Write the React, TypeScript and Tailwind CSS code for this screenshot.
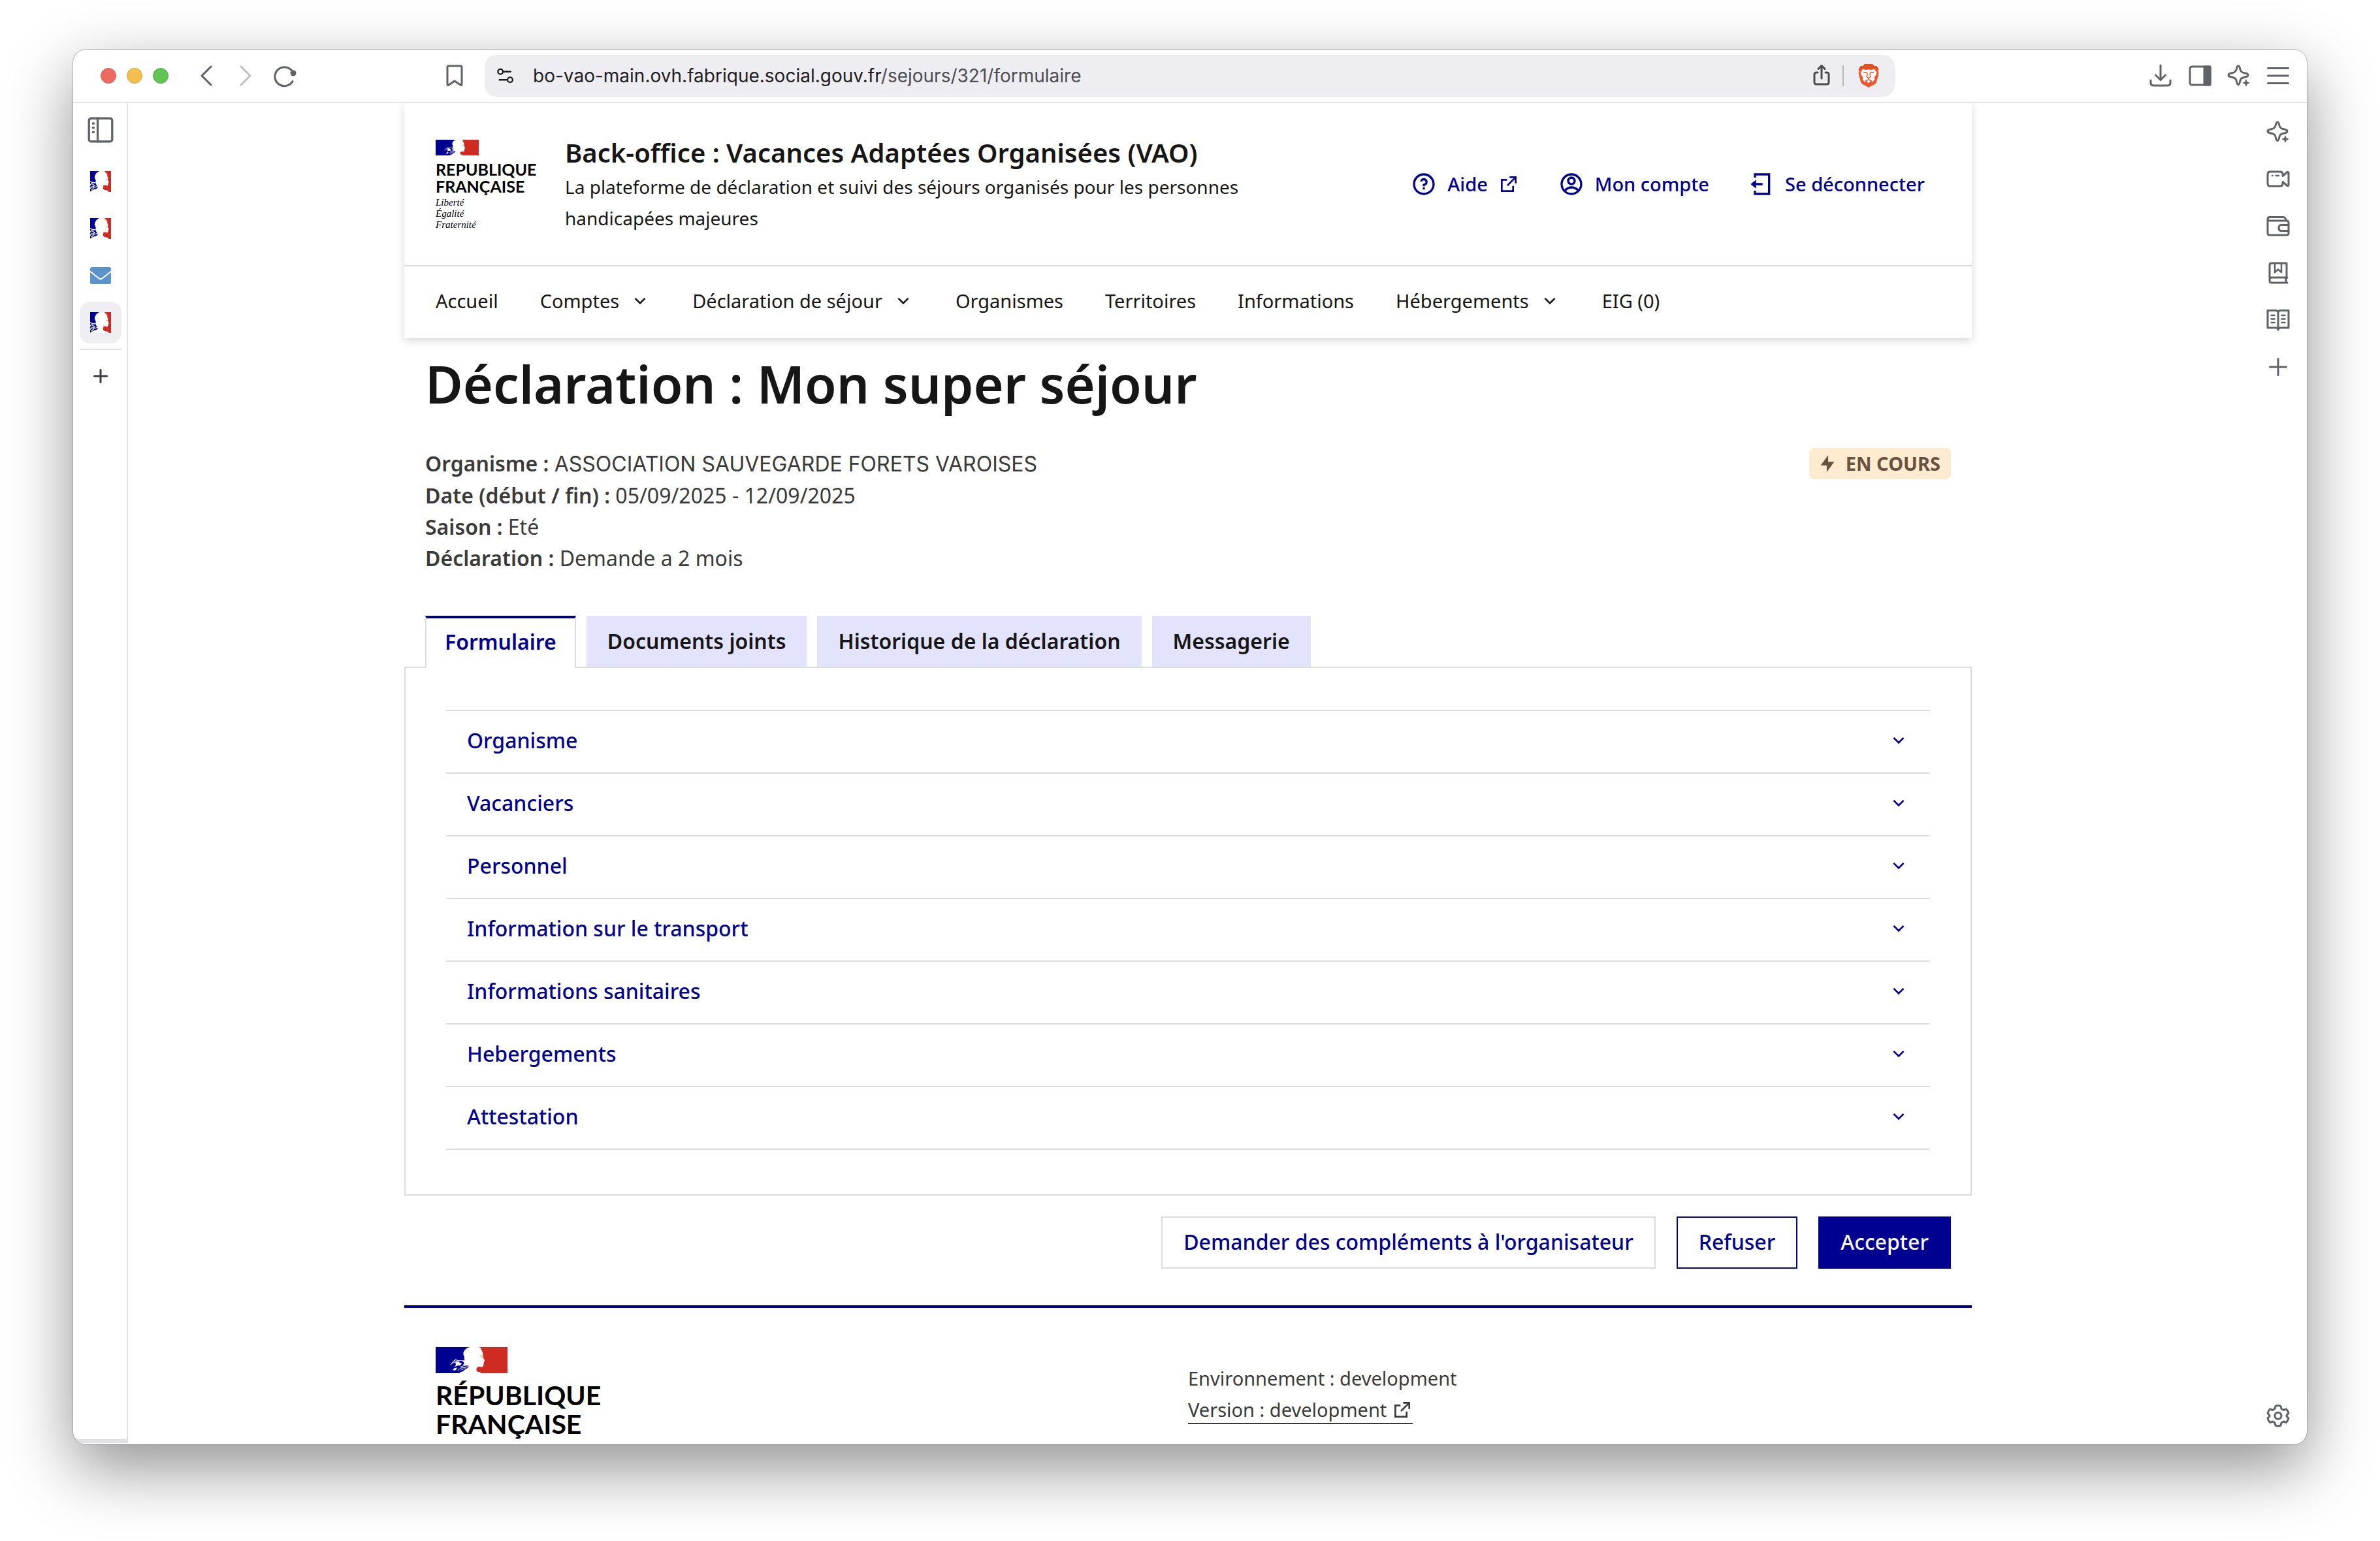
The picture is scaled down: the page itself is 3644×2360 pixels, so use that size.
import React from "react";
import type { ReactNode } from "react";
import { RiQuestionLine, RiAccountCircleLine, RiArrowDownSLine } from "react-icons/ri";

/* ---------- drawings ---------- */

function FlagArt({ className }: { className: string }) {
  return (
    <svg className={className} viewBox="0 0 110 40" preserveAspectRatio="none" aria-hidden="true">
      <rect width="110" height="40" fill="#fff" />
      <path
        fill="#000091"
        d="M0 0H52L48 1.5L45 4L42.5 8V12L44 15L43.5 18.500L46 21L45.500 25L47 28L51 29L49 32L45 34.500L42 37L38 38.500L36 40H0Z"
      />
      <g fill="none" stroke="#fff" strokeLinecap="round" strokeLinejoin="round">
        <path strokeWidth="1.100" d="M23.300 27L27 22L30.500 19.500L34 20.500L44 21" />
        <path strokeWidth="0.900" d="M25.500 24.500L31 22.500L36 22" />
        <path strokeWidth="1" d="M34 35.500L39 32L44 31.500L50 29.500" />
        <path strokeWidth="1.200" d="M38 30.500L43 28.500L47 28" />
        <path strokeWidth="0.700" d="M38 35.500L42 34L46 32" />
      </g>
      <path fill="#fff" d="M30 22.500L34 22L40 25.500L38 28L33 28.500L29 30.500L31 27Z" />
      <path fill="#fff" d="M26.500 34.500L29 32L33 31.500L31 35L28 36Z" />
      <path fill="#fff" d="M41 21L46 20V28L42 27L44 24.500Z" />
      <path
        fill="#ce2b23"
        d="M67 0H110V40H69.500L68 38.500L64 37.500L62.300 35.500L62.600 32.500L64.500 30.500L67 30L71.500 30.500L73 29L72.700 27.500L73.700 26.500L73.300 25L74 23.500L73.800 22.500L75 21L74.500 19L72.800 16.500L73 14L72.200 12.500L72.500 9L71 7L71.500 5.500L69 4L70 2L67.500 1Z"
      />
      <path fill="none" stroke="#8a8a8f" strokeWidth="0.900" d="M67.500 14L71.500 13.500M70 16.500L71.500 14.500" />
    </svg>
  );
}

function Favicon() {
  return (
    <svg className="size-8" viewBox="0 0 32 32" aria-hidden="true">
      <rect width="32" height="32" fill="#fff" />
      <path fill="#000091" d="M0 0H14L10 2.500L7.500 6.500L6.800 10L8.500 14L8.500 18L9.500 21L12 24.500L10 27L5 28.500L0 31.500Z" />
      <path
        fill="none"
        stroke="#fff"
        strokeWidth="1.300"
        strokeLinecap="round"
        d="M0 16L4 17.500L8 18M0 21.500L2 19M3 19.500L7 22.500L4 24.500M2 29L6 25L11 23.500M0 26.500L3 23.500"
      />
      <path
        fill="#ce2b23"
        d="M22 0H32V32H28.500L27 30L21 28.500L19.500 26L20.500 22L23 21.500L26.500 22.500L27.500 21L27 20L28.500 17.500L28 15.500L27 13.500L27.300 10L26 7L26.500 5L24.500 4L25 2.500L22.500 1.500Z"
      />
      <path fill="none" stroke="#9a9aa0" strokeWidth="1" d="M24.500 12.500H26.500" />
    </svg>
  );
}

function BraveLion() {
  return (
    <svg className="h-9 w-8" viewBox="0 0 32 36" aria-hidden="true">
      <path fill="#f1562b" d="M10 0H22L25 3.500L28 3L31.500 8L30.500 11L31.500 14L28 28Q27 30 25 31L16 36L7 31Q5 30 4 28L0.500 14L1.500 11L0.500 8L4 3L7 3.500Z" />
      <path fill="#dd5326" d="M10 0H22L25 3.500L28 3L31.500 8L24 7L16 8L8 7L0.500 8L4 3L7 3.500Z" />
      <path fill="#fff" d="M7 8L12 9L16 8.500L20 9L25 8L28.500 13.500L27 17L24.500 21L25.500 23.500L22 27.500L19 25.500L17 24H15L13 25.500L10 27.500L6.500 23.500L7.500 21L5 17L3.500 13.500Z" />
      <path fill="#fff" d="M11.500 25.500L16 23.500L20.500 25.500L16 29.500Z" />
      <path fill="none" stroke="#f1562b" strokeWidth="1.500" d="M8 12.500L13.500 13.500L14 15L13 19.500L16 21.500L19 19.500L18 15L18.500 13.500L24 12.500M16 21.500V24M11 26.500L16 23.500L21 26.500" />
    </svg>
  );
}

function Glyph({ children, className = "size-9", width = 3 }: { children: ReactNode; className?: string; width?: number }) {
  return (
    <svg
      className={className}
      viewBox="0 0 36 36"
      fill="none"
      stroke="currentColor"
      strokeWidth={width}
      strokeLinecap="round"
      strokeLinejoin="round"
      aria-hidden="true"
    >
      {children}
    </svg>
  );
}

const sparkle = (
  <>
    <path d="M17 3C18.500 3 19 4 19.700 7.500C20.600 11.500 22 13 26.500 13.800C30.500 14.600 32 15 32 17S30.500 19.200 26.500 20.200C22 21.200 20.600 22.500 19.700 26.500C19 30 18.500 31.500 17 31.500S15 30 14.300 26.500C13.400 22.500 12 21.200 7.500 20.200C3.500 19.200 2 19 2 17S3.500 14.600 7.500 13.800C12 13 13.400 11.500 14.300 7.500C15 4 15.500 3 17 3Z" />
    <path fill="currentColor" stroke="none" d="M29 23L30.800 27.200L35 29L30.800 30.800L29 35L27.200 30.800L23 29L27.200 27.200Z" />
  </>
);

function ExternalIcon({ className }: { className: string }) {
  return (
    <svg className={className} viewBox="0 0 24 24" fill="currentColor" aria-hidden="true">
      <path d="M10 6v2H5v11h11v-5h2v7H3V6h7Zm11-3v8h-2V6.413l-7.793 7.794-1.414-1.414L17.585 5H13V3h8Z" />
    </svg>
  );
}

function LogoutIcon() {
  return (
    <svg className="size-10" viewBox="0 0 24 24" fill="currentColor" aria-hidden="true">
      <path d="M5 2h15v20H5v-4h2v2h11V4H7v2H5V2Zm2 9h6v2H7v3l-5-4 5-4v3Z" />
    </svg>
  );
}

/* ---------- browser chrome ---------- */

function IconButton({ label, children, className = "" }: { label: string; children: ReactNode; className?: string }) {
  return (
    <button type="button" aria-label={label} className={`flex items-center justify-center ${className}`}>
      {children}
    </button>
  );
}

function Toolbar() {
  return (
    <div className="flex h-[82px] shrink-0 items-center border-b-2 border-[#e2e1e8] text-[#5f6368]">
      <div className="flex w-[630px] shrink-0 items-center pr-7 pl-[42px]">
        <div className="flex gap-4">
          <button type="button" aria-label="Fermer" className="size-6 rounded-full border border-[#d55b50] bg-[#ed6a5e]" />
          <button type="button" aria-label="Réduire" className="size-6 rounded-full border border-[#d9a540] bg-[#f5bf4f]" />
          <button type="button" aria-label="Agrandir" className="size-6 rounded-full border border-[#51ab45] bg-[#61c554]" />
        </div>
        <div className="ml-10 flex gap-6">
          <IconButton label="Précédent"><Glyph><path d="M25 4L11 18L25 32" /></Glyph></IconButton>
          <IconButton label="Suivant" className="text-[#bfc0c2]"><Glyph><path d="M11 4L25 18L11 32" /></Glyph></IconButton>
          <IconButton label="Recharger">
            <Glyph>
              <path d="M30.500 13A14.500 14.500 0 1 0 30 26.500" />
              <circle cx="31" cy="14" r="4.500" fill="currentColor" stroke="none" />
            </Glyph>
          </IconButton>
        </div>
        <IconButton label="Ajouter aux favoris" className="ml-auto">
          <Glyph><path d="M7 5Q7 3 9 3H27Q29 3 29 5V31.500Q29 33.500 27 32L18 26L9 32Q7 33.500 7 31.500Z" /></Glyph>
        </IconButton>
      </div>
      <div className="flex h-16 min-w-0 flex-1 items-center rounded-[18px] bg-[#eeedf2] pr-6 pl-[18px] text-[#1d1d20]">
        <IconButton label="Informations sur le site">
          <Glyph className="size-7" width={3}>
            <circle cx="8" cy="10" r="5" />
            <path d="M15 10H28M6 26H20" />
            <circle cx="27" cy="26" r="5" />
          </Glyph>
        </IconButton>
        <button type="button" aria-label="Adresse" className="ml-7 flex-1 text-left font-[Inter,sans-serif] text-[28px] leading-9 whitespace-nowrap">
          bo-vao-main.ovh.fabrique.social.gouv.fr<span className="text-[#4c4c52]">/sejours/321/formulaire</span>
        </button>
        <IconButton label="Partager" className="text-[#4a4a4f]">
          <Glyph className="size-9" width={3}>
            <path d="M12 13H10Q7 13 7 16V28Q7 31 10 31H26Q29 31 29 28V16Q29 13 26 13H24M18 22V3M13 7.500L18 2.500L23 7.500" />
          </Glyph>
        </IconButton>
        <div className="mx-[14px] h-8 w-[2px] bg-[#b9b8bd]" />
        <IconButton label="Brave Shields" className="ml-2"><BraveLion /></IconButton>
      </div>
      <div className="flex w-[631px] shrink-0 items-center justify-end gap-6 pr-[26px]">
        <IconButton label="Téléchargements">
          <Glyph><path d="M18 2V24M10.500 17L18 24.500L25.500 17M3 25V29Q3 33 7 33H29Q33 33 33 29V25" /></Glyph>
        </IconButton>
        <IconButton label="Panneau latéral">
          <Glyph>
            <rect x="3" y="4" width="31" height="28" rx="3" />
            <path fill="currentColor" d="M25 4H34V32H25Z" />
          </Glyph>
        </IconButton>
        <IconButton label="Assistant"><Glyph>{sparkle}</Glyph></IconButton>
        <IconButton label="Menu"><Glyph><path d="M2.500 6.500H33.500M2.500 18H33.500M2.500 29.500H33.500" /></Glyph></IconButton>
      </div>
    </div>
  );
}

function LeftRail() {
  return (
    <aside className="mb-[2px] flex w-[84px] shrink-0 flex-col items-center border-r-2 border-b-6 border-[#e2e1e8] pt-[21px] pl-[2px] text-[#5f6368]">
      <IconButton label="Onglets verticaux">
        <Glyph className="size-10">
          <rect x="2" y="2" width="32" height="32" rx="3" />
          <path d="M14 2V34" />
          <path d="M7.500 9H8.500M7.500 15H8.500M7.500 21H8.500" />
        </Glyph>
      </IconButton>
      <div className="mt-[27px] flex flex-col gap-2">
        <IconButton label="Onglet VAO 1" className="size-16"><Favicon /></IconButton>
        <IconButton label="Onglet VAO 2" className="size-16"><Favicon /></IconButton>
        <IconButton label="Messagerie" className="size-16">
          <svg className="h-[26px] w-8" viewBox="0 0 32 26" aria-hidden="true">
            <rect width="32" height="26" rx="3" fill="#5c93cc" />
            <path d="M-1 6L13 17Q16 19.500 19 17L33 6" fill="none" stroke="#fff" strokeWidth="2" />
          </svg>
        </IconButton>
        <IconButton label="Onglet VAO actif" className="size-16 rounded-[16px] bg-[#efeef3]"><Favicon /></IconButton>
      </div>
      <div className="mt-2 h-[2px] w-16 bg-[#e2e1e8]" />
      <IconButton label="Nouvel onglet" className="mt-[22px] text-[#3c3c40]"><Glyph><path d="M18 8.500V27.500M8.500 18H27.500" /></Glyph></IconButton>
    </aside>
  );
}

function RightRail() {
  return (
    <aside className="flex w-[90px] shrink-0 flex-col items-center gap-9 pt-[26px] pb-[26px] pl-[2px] text-[#5f6368]">
      <IconButton label="Assistant Leo"><Glyph>{sparkle}</Glyph></IconButton>
      <IconButton label="Visioconférence">
        <Glyph>
          <path d="M6 7H21Q25 7 25 11V13.500L32 7.500Q34 7 34 9V27Q34 29 32 28.500L25 22.500V25Q25 29 21 29H6Q2 29 2 25V11Q2 7 6 7Z" />
          <path strokeWidth="2.500" d="M9 13H9.500M14.500 13H19" />
        </Glyph>
      </IconButton>
      <IconButton label="Portefeuille">
        <Glyph>
          <path d="M2 9V29Q2 32 5 32H31Q34 32 34 29V13Q34 10 31 10L29 6.500Q28 4.500 26 4.500H5Q2 4.500 2 7.500Q2 10 5 10H31" />
          <path d="M34 16.500H23Q19 16.500 19 21T23 25.500H34" />
        </Glyph>
      </IconButton>
      <IconButton label="Favoris">
        <Glyph>
          <path d="M31 26V3H8Q5 3 5 6V30Q5 33 8 33H32M5 28Q5 25 8 25H32M30 25V33" />
          <path strokeWidth="2.500" d="M13 3V17L18 12.500L23 17V3" />
        </Glyph>
      </IconButton>
      <IconButton label="Liste de lecture">
        <Glyph>
          <path d="M18 6Q17 3.500 14 3.500H2V30H15Q17 30 18 33Q19 30 21 30H34V3.500H22Q19 3.500 18 6V32" />
          <path strokeWidth="2.500" d="M7.500 11H12.500M7.500 16.500H12.500M7.500 22H12.500M23.500 11H28.500M23.500 16.500H28.500M23.500 22H28.500" />
        </Glyph>
      </IconButton>
      <IconButton label="Ajouter"><Glyph><path d="M18 5.500V30.500M5.500 18H30.500" /></Glyph></IconButton>
      <IconButton label="Réglages" className="mt-auto">
        <Glyph>
          <path d="M14 3.500Q18 1.500 22 3.500L23 7.500L26.500 9.500L30.500 8Q33.500 11 34 14.500L31 17.500V19L34 22Q33 26 30.500 28.500L26.500 27L23 29L22 33Q18 34.500 14 33L13 29L9.500 27L5.500 28.500Q2.500 25.500 2 22L5 19V17.500L2 14.500Q3 10.500 5.500 8L9.500 9.500L13 7.500Z" />
          <circle cx="18" cy="18.200" r="5" />
        </Glyph>
      </IconButton>
    </aside>
  );
}

/* ---------- page ---------- */

type NavItem = { label: string; menu?: boolean };

const navItems: NavItem[] = [
  { label: "Accueil" },
  { label: "Comptes", menu: true },
  { label: "Déclaration de séjour", menu: true },
  { label: "Organismes" },
  { label: "Territoires" },
  { label: "Informations" },
  { label: "Hébergements", menu: true },
  { label: "EIG (0)" },
];

function SiteHeader() {
  return (
    <header className="bg-white shadow-[0_4px_12px_rgba(0,0,18,0.16)]">
      <div className="flex items-start px-12 py-12">
        <div className="mt-2 w-[198px] shrink-0 text-black">
          <FlagArt className="h-6 w-[66px]" />
          <p className="mt-2 font-[Lato,sans-serif] text-[25px] leading-[26px] font-bold">
            REPUBLIQUE
            <br />
            FRANÇAISE
          </p>
          <p className="mt-1 font-['Liberation_Serif',serif] text-[15px] leading-[17px] italic">
            Liberté
            <br />
            Égalité
            <br />
            Fraternité
          </p>
        </div>
        <div className="max-w-[1100px]">
          <p className="text-[40px] leading-14 font-semibold">Back-office : Vacances Adaptées Organisées (VAO)</p>
          <p className="text-[28px] leading-12">
            La plateforme de déclaration et suivi des séjours organisés pour les personnes handicapées majeures
          </p>
        </div>
        <div className="ml-auto flex items-center gap-3 self-center text-[29px] leading-12 font-medium text-[#000091]">
          <a href="#aide" className="flex items-center gap-4 px-6">
            <RiQuestionLine className="size-10" />
            Aide
            <ExternalIcon className="size-8" />
          </a>
          <a href="#compte" className="flex items-center gap-4 px-6">
            <RiAccountCircleLine className="size-10" />
            Mon compte
          </a>
          <button type="button" className="flex items-center gap-4 px-6">
            <LogoutIcon />
            Se déconnecter
          </button>
        </div>
      </div>
      <nav aria-label="Menu principal" className="flex h-28 items-center gap-16 border-t-2 border-[#ddd] px-12 pb-1 text-[29px] leading-12">
        {navItems.map((item) =>
          item.menu ? (
            <button key={item.label} type="button" aria-expanded="false" className="flex items-center gap-4">
              {item.label}
              <RiArrowDownSLine className="size-8" />
            </button>
          ) : (
            <a key={item.label} href="#">
              {item.label}
            </a>
          ),
        )}
      </nav>
    </header>
  );
}

const tabs = ["Formulaire", "Documents joints", "Historique de la déclaration", "Messagerie"];

const sections = [
  "Organisme",
  "Vacanciers",
  "Personnel",
  "Information sur le transport",
  "Informations sanitaires",
  "Hebergements",
  "Attestation",
];

function Summary() {
  return (
    <div className="mt-12 flex items-start justify-between px-8 text-[32px] leading-12 text-[#3a3a3a]">
      <div>
        <p>
          <b className="font-semibold">Organisme :</b>{" "}
          <span className="font-[Inter,sans-serif]">ASSOCIATION SAUVEGARDE FORETS VAROISES</span>
        </p>
        <p>
          <b className="font-semibold">Date (début / fin) :</b> 05/09/2025 - 12/09/2025
        </p>
        <p>
          <b className="font-semibold">Saison :</b> Eté
        </p>
        <p>
          <b className="font-semibold">Déclaration :</b> Demande a 2 mois
        </p>
      </div>
      <p className="flex items-center gap-4 rounded-lg bg-[#feebd0] px-4 text-[29px] font-bold text-[#695240]">
        <svg className="h-7 w-6" viewBox="1 0 22 24" fill="currentColor" aria-hidden="true">
          <path d="M13 9.500h8.500L11 24v-9.500H2.500L13 0v9.500Z" />
        </svg>
        EN COURS
      </p>
    </div>
  );
}

function DeclarationTabs() {
  return (
    <section className="mt-16">
      <div role="tablist" className="relative flex gap-4 px-8">
        {tabs.map((tab, i) => (
          <button
            key={tab}
            type="button"
            role="tab"
            aria-selected={i === 0}
            className={
              i === 0
                ? "-mb-[2px] h-20 border-x-2 border-t-4 border-x-[#ddd] border-t-[#000091] bg-white px-7 pb-1 text-[32px] leading-12 font-semibold text-[#000091]"
                : "h-[78px] bg-[#e3e3fd] px-8 text-[32px] leading-12 font-semibold text-[#161616]"
            }
          >
            {tab}
          </button>
        ))}
      </div>
      <div role="tabpanel" className="border-2 border-[#ddd] px-[62px] pt-16 pb-[68px]">
        {sections.map((name, i) => (
          <h3 key={name} className={i === 0 ? "border-y-2 border-[#ddd]" : "border-b-2 border-[#ddd]"}>
            <button
              type="button"
              aria-expanded="false"
              className="flex h-[94px] w-full items-center justify-between px-8 pb-1 text-[32px] leading-12 font-medium text-[#000091]"
            >
              {name}
              <RiArrowDownSLine className="size-8" />
            </button>
          </h3>
        ))}
      </div>
      <div className="mt-8 flex justify-end gap-8 px-8 text-[32px] leading-12 font-medium">
        <button type="button" className="h-20 border-2 border-[#ddd] px-8 pb-[2px] text-[#000091]">
          Demander des compléments à l'organisateur
        </button>
        <button type="button" className="h-20 border-2 border-[#000091] px-8 pb-[2px] text-[#000091]">
          Refuser
        </button>
        <button type="button" className="h-20 border-2 border-[#000091] bg-[#000091] px-8 pb-[2px] text-[#f5f5fe]">
          Accepter
        </button>
      </div>
    </section>
  );
}

function SiteFooter() {
  return (
    <footer className="mt-14 grid grid-cols-2 border-t-4 border-[#000091] px-12">
      <div className="pt-[60px] text-black">
        <FlagArt className="h-10 w-[110px]" />
        <p className="mt-3 font-[Lato,sans-serif] text-[41px] leading-11 font-bold">
          RÉPUBLIQUE
          <br />
          FRANÇAISE
        </p>
      </div>
      <div className="pt-[84px] text-[29px] leading-12 text-[#3a3a3a]">
        <p>Environnement : development</p>
        <a href="#version" className="mt-1 inline-flex items-center gap-2 border-b-2 border-[#3a3a3a] leading-10">
          Version : development
          <ExternalIcon className="size-8" />
        </a>
      </div>
    </footer>
  );
}

export default function App() {
  return (
    <div className="flex h-screen flex-col bg-white px-28 pt-[76px] pb-[148px] font-['Noto_Sans',sans-serif] text-[#161616]">
      <div className="flex min-h-0 flex-1 flex-col overflow-hidden rounded-[20px] bg-white shadow-[0_0_0_1px_rgba(0,0,0,0.22),0_36px_100px_rgba(0,0,0,0.44)]">
        <Toolbar />
        <div className="flex min-h-0 flex-1">
          <LeftRail />
          <div className="min-w-0 flex-1 overflow-hidden">
            <div className="mx-auto max-w-[2400px]">
              <SiteHeader />
              <main>
                <h1 className="mt-[22px] mb-[50px] px-8 text-[79px] leading-24 font-semibold">Déclaration : Mon super séjour</h1>
                <Summary />
                <DeclarationTabs />
              </main>
              <SiteFooter />
            </div>
          </div>
          <RightRail />
        </div>
      </div>
    </div>
  );
}
